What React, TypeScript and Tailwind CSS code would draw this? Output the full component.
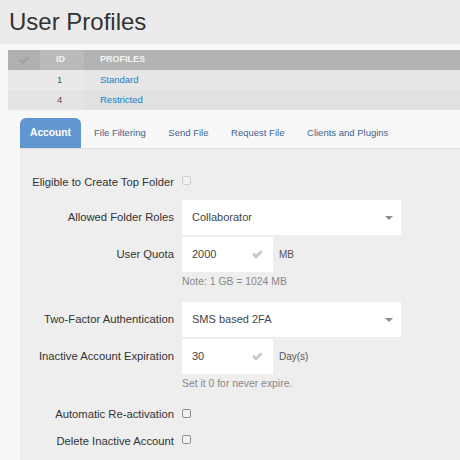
import { ReactNode } from 'react';

const tabs = ['File Filtering', 'Send File', 'Request File', 'Clients and Plugins'];

function Tick({ className }: { className: string }) {
  return (
    <svg viewBox="0 0 11 9" className={`h-[9px] w-[11px] ${className}`} fill="currentColor">
      <polygon points="0,4.8 2,2.8 4,4.8 8.6,0.2 10.6,2.2 4,8.8" />
    </svg>
  );
}

function Box({ value, wide }: { value: string; wide?: boolean }) {
  return (
    <div className={`flex h-[35px] items-center justify-between bg-white pl-[10px] text-[11px] text-[#444] ${wide ? 'w-[219px] pr-[8px]' : 'w-[91px] pr-[10px]'}`}>
      <span>{value}</span>
      {wide ? (
        <span className="h-0 w-0 border-x-[4px] border-t-[4px] border-x-transparent border-t-[#8c8c8c]" />
      ) : (
        <Tick className="text-[#c8c8c8]" />
      )}
    </div>
  );
}

function Row({ label, children, className = '' }: { label: string; children: ReactNode; className?: string }) {
  return (
    <div className={`flex items-center gap-[8px] ${className}`}>
      <div className="w-[154px] shrink-0 text-right text-[11.25px] text-[#333]">{label}</div>
      {children}
    </div>
  );
}

function CheckBox({ light }: { light?: boolean }) {
  return (
    <span className={`block h-[9px] w-[9px] rounded-[2px] border bg-[#f2f2f2] ${light ? 'border-[#d0d0d0]' : 'border-[#8f8f8f]'}`} />
  );
}

export default function App() {
  return (
    <div className="h-[460px] w-[460px] overflow-hidden bg-[#f8f8f8] font-['Liberation_Sans',Arial,sans-serif]">
      <header className="flex h-[44px] items-center bg-[#ebebeb] pl-[9px]">
        <h1 className="text-[24px] leading-none text-[#333]">User Profiles</h1>
      </header>

      {/* Profiles table */}
      <div className="ml-[8px] mt-[6px] text-[9.5px]">
        <div className="flex h-[20px] items-center bg-[#b3b3b3] text-[9px] font-bold text-[#f4f4f4]">
          <div className="flex h-full w-[32px] items-center justify-center bg-[#b0b0b0]">
            <Tick className="text-[#a2a2a2]" />
          </div>
          <div className="flex h-full w-[44px] items-center bg-[#bababa] pl-[16px]">ID</div>
          <div className="pl-[16px]">PROFILES</div>
        </div>
        {[
          { id: '1', name: 'Standard', bg: 'bg-[#e6e6e6]', side: 'bg-[#e9e9e9]' },
          { id: '4', name: 'Restricted', bg: 'bg-[#e1e1e1]', side: 'bg-[#e4e4e4]' },
        ].map(r => (
          <div key={r.id} className={`flex h-[20px] items-center ${r.bg}`}>
            <div className={`h-full w-[32px] ${r.side}`} />
            <div className={`flex h-full w-[44px] items-center ${r.side} pl-[17px] text-[#555]`}>{r.id}</div>
            <a className="pl-[16px] text-[#0a84d0]">{r.name}</a>
          </div>
        ))}
      </div>

      {/* Tabs */}
      <div className="ml-[20px] mt-[8px] flex h-[31px] items-stretch border-b border-[#dedede]">
        <div className="flex w-[61px] items-center justify-center rounded-t-[6px] bg-[#6097d0] text-[10.25px] font-bold text-white">
          Account
        </div>
        <nav className="flex items-center gap-[22.6px] pl-[13px] text-[9.5px] text-[#3f5f8f]">
          {tabs.map(t => (
            <span key={t}>{t}</span>
          ))}
        </nav>
      </div>

      {/* Account form */}
      <div className="ml-[20px] h-[320px] bg-[#eeeeee] pt-[25px]">
        <Row label="Eligible to Create Top Folder" className="h-[13px] !items-start">
          <span className="pt-[2px]">
            <CheckBox light />
          </span>
        </Row>
        <Row label="Allowed Folder Roles" className="mt-[13px]">
          <Box value="Collaborator" wide />
        </Row>
        <Row label="User Quota" className="mt-[2px]">
          <Box value="2000" />
          <span className="-ml-[2px] text-[10px] text-[#555]">MB</span>
        </Row>
        <div className="ml-[162px] mt-[4px] h-[26px] text-[10.4px] leading-[12px] text-[#888]">Note: 1 GB = 1024 MB</div>
        <Row label="Two-Factor Authentication">
          <Box value="SMS based 2FA" wide />
        </Row>
        <Row label="Inactive Account Expiration" className="mt-[2px]">
          <Box value="30" />
          <span className="-ml-[2px] text-[10px] text-[#555]">Day(s)</span>
        </Row>
        <div className="ml-[162px] mt-[4px] h-[30px] text-[10.4px] leading-[12px] text-[#888]">Set it 0 for never expire.</div>
        <Row label="Automatic Re-activation" className="h-[13px]">
          <span className="-mt-[3px]">
            <CheckBox />
          </span>
        </Row>
        <Row label="Delete Inactive Account" className="mt-[14px] h-[13px]">
          <span className="-mt-[4px]">
            <CheckBox />
          </span>
        </Row>
      </div>
    </div>
  );
}
